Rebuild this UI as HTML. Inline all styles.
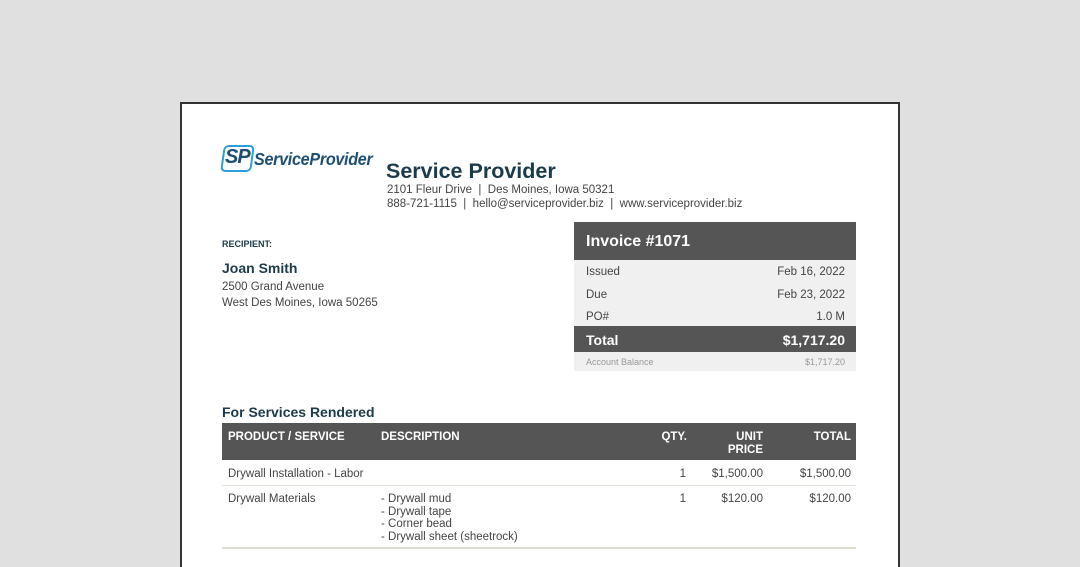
<!DOCTYPE html>
<html><head><style>
html,body{margin:0;width:1080px;height:567px;overflow:hidden}
body{background:#e0e0e0;font-family:"Liberation Sans",Arial,sans-serif;position:relative}
.page{position:absolute;left:180px;top:102px;width:716px;height:463px;background:#fff;border:2px solid #333;border-bottom:none}
.a{position:absolute;white-space:nowrap}
.r{text-align:right}
</style></head><body>
<div class="page"></div>
<div class="a" style="left:222px;top:145px;width:27px;height:23px;border:2px solid #2a9fd8;border-radius:5px;background:#fff;transform:skewX(-8deg)"></div>
<div class="a" style="left:225px;top:146px;font:italic bold 20px 'Liberation Sans';color:#1d4f73;letter-spacing:-1px">SP</div>
<div class="a" style="left:254px;top:149px;font:italic bold 17.5px 'Liberation Sans';color:#1d4f73;letter-spacing:-0.3px;transform:scaleX(0.92);transform-origin:left">ServiceProvider</div>
<div class="a" style="left:386px;top:159px;font:bold 21.5px 'Liberation Sans';color:#1b3a4b">Service Provider</div>
<div class="a" style="left:387px;top:184px;font:11.5px 'Liberation Sans';color:#444">2101 Fleur Drive &nbsp;|&nbsp; Des Moines, Iowa 50321</div>
<div class="a" style="left:387px;top:198px;font:11.5px 'Liberation Sans';color:#444">888-721-1115 &nbsp;|&nbsp; hello@serviceprovider.biz &nbsp;|&nbsp; www.serviceprovider.biz</div>
<div class="a" style="left:222px;top:239px;font:bold 9px 'Liberation Sans';color:#1b3a4b">RECIPIENT:</div>
<div class="a" style="left:222px;top:260px;font:bold 14px 'Liberation Sans';color:#1b3a4b">Joan Smith</div>
<div class="a" style="left:222px;top:281px;font:11.5px 'Liberation Sans';color:#444">2500 Grand Avenue</div>
<div class="a" style="left:222px;top:297px;font:11.5px 'Liberation Sans';color:#444">West Des Moines, Iowa 50265</div>
<div class="a" style="left:574px;top:222px;width:282px;height:38px;background:#555"></div>
<div class="a" style="left:586px;top:233px;font:bold 16px 'Liberation Sans';color:#fff">Invoice #1071</div>
<div class="a" style="left:574px;top:260px;width:282px;height:66px;background:#f0f0f0"></div>
<div class="a" style="left:586px;top:266px;font:11.5px 'Liberation Sans';color:#444">Issued</div>
<div class="a r" style="right:235px;top:266px;font:11.5px 'Liberation Sans';color:#444">Feb 16, 2022</div>
<div class="a" style="left:586px;top:289px;font:11.5px 'Liberation Sans';color:#444">Due</div>
<div class="a r" style="right:235px;top:289px;font:11.5px 'Liberation Sans';color:#444">Feb 23, 2022</div>
<div class="a" style="left:586px;top:311px;font:11.5px 'Liberation Sans';color:#444">PO#</div>
<div class="a r" style="right:235px;top:311px;font:11.5px 'Liberation Sans';color:#444">1.0 M</div>
<div class="a" style="left:574px;top:326px;width:282px;height:26px;background:#555"></div>
<div class="a" style="left:586px;top:332px;font:bold 14px 'Liberation Sans';color:#fff">Total</div>
<div class="a r" style="right:235px;top:332px;font:bold 14px 'Liberation Sans';color:#fff">$1,717.20</div>
<div class="a" style="left:574px;top:352px;width:282px;height:19px;background:#f0f0f0"></div>
<div class="a" style="left:586px;top:357px;font:9px 'Liberation Sans';color:#999">Account Balance</div>
<div class="a r" style="right:235px;top:357px;font:9px 'Liberation Sans';color:#999">$1,717.20</div>
<div class="a" style="left:222px;top:404px;font:bold 14px 'Liberation Sans';color:#1b3a4b">For Services Rendered</div>
<div class="a" style="left:222px;top:423px;width:634px;height:37px;background:#555"></div>
<div class="a" style="left:228px;top:431px;font:bold 11.5px 'Liberation Sans';color:#fff">PRODUCT / SERVICE</div>
<div class="a" style="left:381px;top:431px;font:bold 11.5px 'Liberation Sans';color:#fff">DESCRIPTION</div>
<div class="a r" style="right:393px;top:431px;font:bold 11.5px 'Liberation Sans';color:#fff">QTY.</div>
<div class="a r" style="right:317px;top:431px;font:bold 11.5px 'Liberation Sans';color:#fff;line-height:13px">UNIT<br>PRICE</div>
<div class="a r" style="right:229px;top:431px;font:bold 11.5px 'Liberation Sans';color:#fff">TOTAL</div>
<div class="a" style="left:228px;top:468px;font:11.5px 'Liberation Sans';color:#444">Drywall Installation - Labor</div>
<div class="a r" style="right:394px;top:468px;font:11.5px 'Liberation Sans';color:#444">1</div>
<div class="a r" style="right:317px;top:468px;font:11.5px 'Liberation Sans';color:#444">$1,500.00</div>
<div class="a r" style="right:229px;top:468px;font:11.5px 'Liberation Sans';color:#444">$1,500.00</div>
<div class="a" style="left:222px;top:485px;width:634px;height:1px;background:#e2e2d8"></div>
<div class="a" style="left:228px;top:493px;font:11.5px 'Liberation Sans';color:#444">Drywall Materials</div>
<div class="a" style="left:381px;top:493px;font:11.5px 'Liberation Sans';color:#444;line-height:12.7px">- Drywall mud<br>- Drywall tape<br>- Corner bead<br>- Drywall sheet (sheetrock)</div>
<div class="a r" style="right:394px;top:493px;font:11.5px 'Liberation Sans';color:#444">1</div>
<div class="a r" style="right:317px;top:493px;font:11.5px 'Liberation Sans';color:#444">$120.00</div>
<div class="a r" style="right:229px;top:493px;font:11.5px 'Liberation Sans';color:#444">$120.00</div>
<div class="a" style="left:222px;top:547px;width:634px;height:2px;background:#dcdcd0"></div>
</body></html>
